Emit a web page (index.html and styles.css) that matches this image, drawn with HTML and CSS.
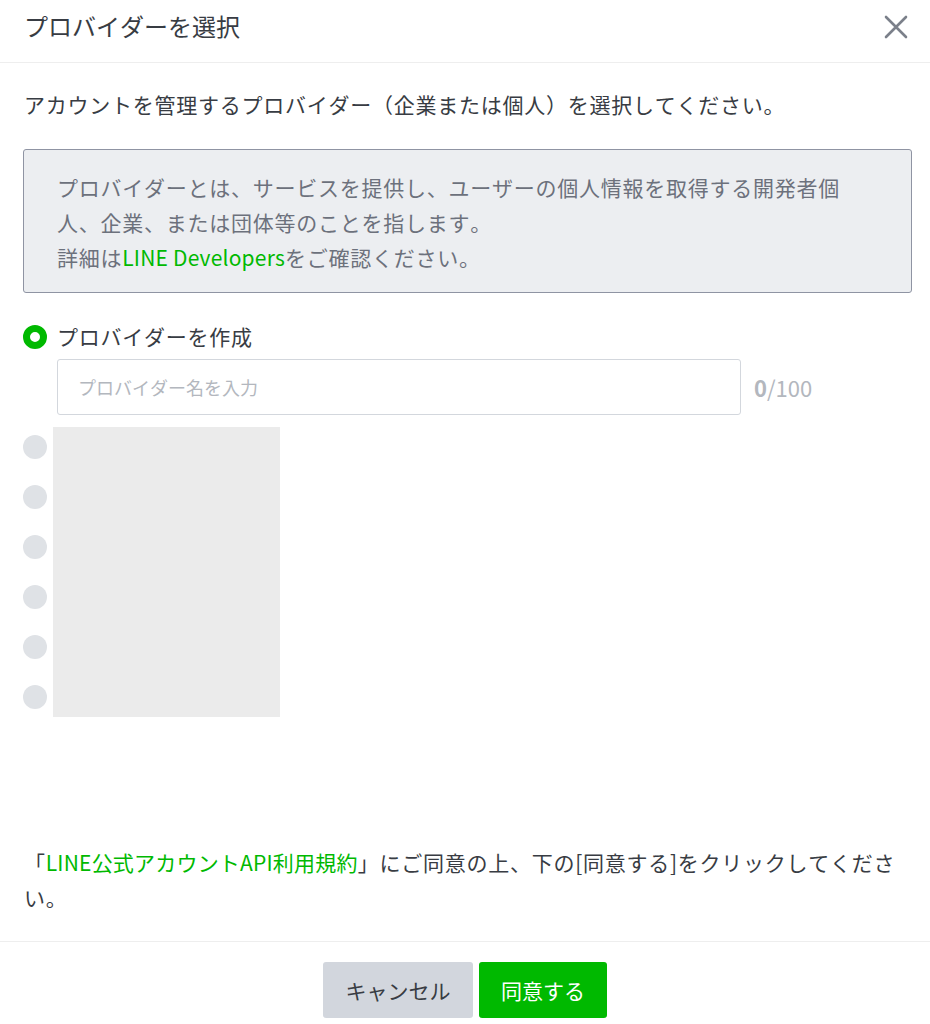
FILE: index.html
```html
<!DOCTYPE html>
<html lang="ja">
<head>
<meta charset="utf-8">
<title>プロバイダーを選択</title>
<link rel="stylesheet" href="styles.css">
</head>
<body>
<div class="modal">
  <header class="modal-header">
    <h1 class="modal-title">プロバイダーを選択</h1>
    <button class="close-btn" aria-label="閉じる">
      <svg width="24" height="24" viewBox="0 0 24 24"><path d="M2 2 L22 22 M22 2 L2 22" stroke="#7b808a" stroke-width="2.6" stroke-linecap="round" fill="none"/></svg>
    </button>
  </header>
  <main class="modal-body">
    <p class="intro">アカウントを管理するプロバイダー（企業または個人）を選択してください。</p>
    <div class="info-box">
      <p>プロバイダーとは、サービスを提供し、ユーザーの個人情報を取得する開発者個人、企業、または団体等のことを指します。</p>
      <p>詳細は<a class="link" href="#">LINE Developers</a>をご確認ください。</p>
    </div>
    <label class="radio-row">
      <span class="radio radio-checked"></span>
      <span class="radio-label">プロバイダーを作成</span>
    </label>
    <div class="input-row">
      <div class="text-input"><span class="placeholder">プロバイダー名を入力</span></div>
      <span class="counter"><b>0</b>/100</span>
    </div>
    <div class="skeleton">
      <div class="skeleton-radios">
        <span class="radio radio-empty"></span>
        <span class="radio radio-empty"></span>
        <span class="radio radio-empty"></span>
        <span class="radio radio-empty"></span>
        <span class="radio radio-empty"></span>
        <span class="radio radio-empty"></span>
      </div>
      <div class="skeleton-block"></div>
    </div>
    <p class="terms">「<a class="link" href="#">LINE公式アカウントAPI利用規約</a>」にご同意の上、下の[同意する]をクリックしてください。</p>
  </main>
  <footer class="modal-footer">
    <button class="btn btn-cancel">キャンセル</button>
    <button class="btn btn-agree">同意する</button>
  </footer>
</div>
</body>
</html>
```
FILE: styles.css
```css
* { box-sizing: border-box; }
html, body { margin: 0; padding: 0; background: #fff; }
body {
  font-family: "Noto Sans CJK JP", "Noto Sans", sans-serif;
  color: #383c43;
  text-spacing-trim: space-all;
  font-kerning: none;
  font-feature-settings: "palt" 0, "halt" 0, "kern" 0;
}
p { margin: 0; }
.modal {
  height: 1024px;
  display: flex;
  flex-direction: column;
}
.modal-header {
  height: 63px;
  flex: none;
  padding: 0 22px 0 24px;
  display: flex;
  align-items: center;
  justify-content: space-between;
  border-bottom: 1px solid #eeeeee;
}
.modal-title {
  margin: 0;
  font-size: 24px;
  font-weight: 400;
  line-height: 30px;
  color: #383c43;
  padding-bottom: 10px;
}
.close-btn {
  border: 0;
  background: none;
  padding: 0;
  width: 24px;
  height: 24px;
  margin-bottom: 8px;
  display: flex;
}
.modal-body {
  flex: 1;
  display: flex;
  flex-direction: column;
  padding: 24px 24px 26px;
  font-size: 21px;
  line-height: 35px;
  letter-spacing: 0.75px;
}
.intro { color: #383c43; }
.info-box {
  margin: 27px -6px 0 -1px;
  padding: 20px 40px 17px 33px;
  background: #eceef1;
  border: 1px solid #8f94a3;
  border-radius: 3px;
  color: #6c717c;
}
.link {
  color: #00b900;
  text-decoration: none;
  letter-spacing: 0.2px;
}
.radio-row {
  margin-top: 26px;
  display: flex;
  align-items: center;
  margin-left: -1px;
}
.radio {
  width: 24px;
  height: 24px;
  border-radius: 50%;
  flex: none;
  display: block;
}
.radio-checked {
  border: 7px solid #00b900;
  background: #fff;
}
.radio-empty { background: #dfe2e6; }
.radio-label {
  margin-left: 10px;
  color: #383c43;
}
.input-row {
  margin: 5px 0 0 33px;
  display: flex;
  align-items: center;
  letter-spacing: 0;
}
.text-input {
  width: 684px;
  height: 56px;
  border: 1px solid #d3d7dd;
  border-radius: 3px;
  padding: 0 20px;
  display: flex;
  align-items: center;
}
.placeholder {
  font-size: 18px;
  color: #b3b7be;
}
.counter {
  margin-left: 13px;
  font-size: 22px;
  color: #b3b7be;
}
.counter b { font-weight: 700; }
.skeleton {
  margin-top: 12px;
  margin-left: -1px;
  display: flex;
  align-items: center;
  gap: 6px;
}
.skeleton-radios {
  display: flex;
  flex-direction: column;
  gap: 26px;
}
.skeleton-block {
  width: 227px;
  height: 290px;
  background: #ebebeb;
}
.terms {
  margin-top: auto;
  color: #383c43;
}
.modal-footer {
  flex: none;
  border-top: 1px solid #eeeeee;
  padding: 20px 0 6px;
  display: flex;
  justify-content: center;
  gap: 6px;
}
.btn {
  height: 56px;
  border: 0;
  border-radius: 3px;
  font-family: inherit;
  font-size: 21px;
  text-spacing-trim: space-all;
  font-kerning: none;
}
.btn-cancel {
  width: 150px;
  background: #d2d6dd;
  color: #383c43;
}
.btn-agree {
  width: 128px;
  background: #00b900;
  color: #fff;
}
```
